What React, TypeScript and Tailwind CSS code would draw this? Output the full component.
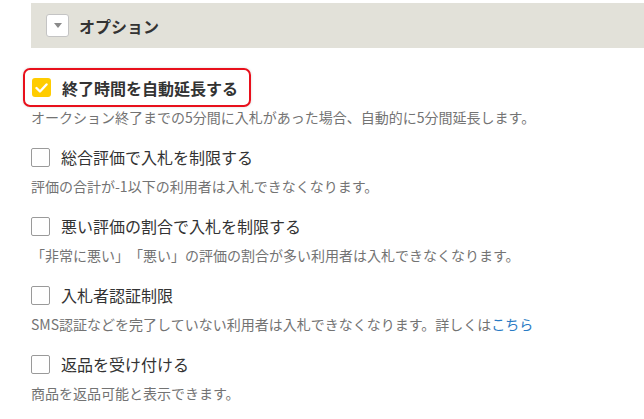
import React from 'react';

const options = [
  {
    label: '総合評価で入札を制限する',
    desc: '評価の合計が-1以下の利用者は入札できなくなります。',
  },
  {
    label: '悪い評価の割合で入札を制限する',
    desc: '「非常に悪い」「悪い」の評価の割合が多い利用者は入札できなくなります。',
  },
  {
    label: '入札者認証制限',
    desc: 'SMS認証などを完了していない利用者は入札できなくなります。詳しくは',
    link: 'こちら',
  },
  {
    label: '返品を受け付ける',
    desc: '商品を返品可能と表示できます。',
  },
];

function EmptyBox() {
  return <span className="w-[19px] h-[19px] shrink-0 border border-[#9a9a9a] rounded-[2px] bg-white" />;
}

export default function App() {
  return (
    <div
      className="min-h-screen bg-white pl-[31px] pt-[3px] text-[#333] [text-spacing-trim:space-all]"
      style={{ fontFamily: '"Noto Sans CJK JP", "Noto Sans", sans-serif' }}
    >
      {/* Section header */}
      <div className="h-[45px] bg-[#e2e1d9] flex items-center pl-[15px]">
        <button className="w-[23px] h-[23px] bg-white border border-[#c4c4c4] rounded-[3px] flex items-center justify-center">
          <svg width="8" height="5" viewBox="0 0 8 5">
            <path d="M0 0h8L4 5z" fill="#8a8a8a" />
          </svg>
        </button>
        <span className="ml-[10px] text-[16px] font-bold leading-none">オプション</span>
      </div>

      {/* Highlighted option */}
      <div className="mt-[20px]">
        <div className="-ml-[8px] inline-flex items-center h-[39px] border-2 border-[#e8101c] rounded-[7px] pl-[7px] pr-[11px] shadow-[0_0_3px_rgba(0,0,0,0.15)]">
          <span className="w-[19px] h-[19px] bg-[#ffcc00] rounded-[3px] flex items-center justify-center">
            <svg width="13" height="10" viewBox="0 0 13 10">
              <path d="M1.5 5l3.5 3.5L11.5 1.5" fill="none" stroke="#fff" strokeWidth="2.4" strokeLinecap="round" strokeLinejoin="round" />
            </svg>
          </span>
          <span className="ml-[11px] text-[16px] font-bold leading-[20px]">終了時間を自動延長する</span>
        </div>
        <p className="text-[14px] leading-[20px] text-[#737373]">
          オークション終了までの5分間に入札があった場合、自動的に5分間延長します。
        </p>
      </div>

      {options.map((o) => (
        <div key={o.label} className="mt-[20px]">
          <label className="flex items-center h-[20px]">
            <EmptyBox />
            <span className="ml-[11px] text-[16px] leading-[20px]">{o.label}</span>
          </label>
          <p className="mt-[9px] text-[14px] leading-[20px] text-[#737373]">
            {o.desc}
            {o.link && <a className="text-[#2a7bc4]">{o.link}</a>}
          </p>
        </div>
      ))}
    </div>
  );
}
